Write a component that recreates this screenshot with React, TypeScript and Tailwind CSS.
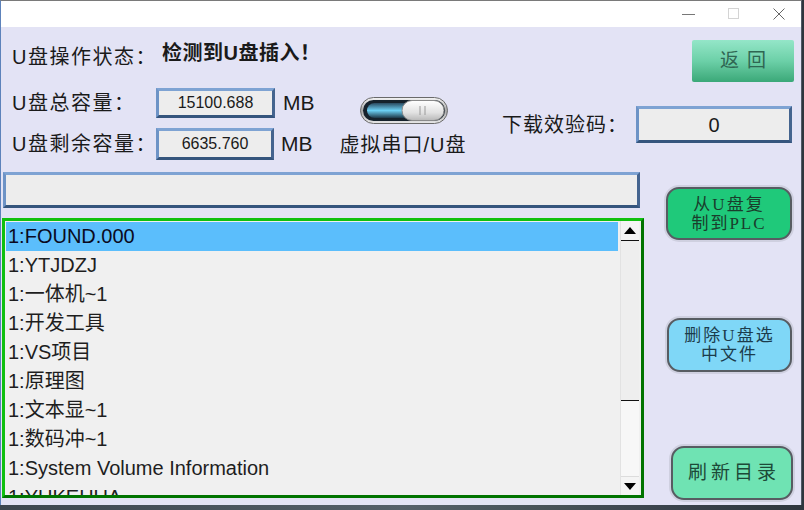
const rows = [
  "1:FOUND.000",
  "1:YTJDZJ",
  "1:一体机~1",
  "1:开发工具",
  "1:VS项目",
  "1:原理图",
  "1:文本显~1",
  "1:数码冲~1",
  "1:System Volume Information",
  "1:YUKEHUA",
];

function Toggle() {
  return (
    <svg width="88" height="27" viewBox="0 0 88 27">
      <defs>
        <linearGradient id="rim" x1="0" y1="0" x2="0" y2="1">
          <stop offset="0" stopColor="#f4f4f4" />
          <stop offset="0.5" stopColor="#a8a8a8" />
          <stop offset="1" stopColor="#e8e8e8" />
        </linearGradient>
        <linearGradient id="glow" x1="0" y1="0" x2="0" y2="1">
          <stop offset="0" stopColor="#2a4a60" />
          <stop offset="0.5" stopColor="#6cd0f4" />
          <stop offset="1" stopColor="#1e3848" />
        </linearGradient>
        <linearGradient id="knob" x1="0" y1="0" x2="0" y2="1">
          <stop offset="0" stopColor="#ffffff" />
          <stop offset="0.6" stopColor="#e2e2e2" />
          <stop offset="1" stopColor="#b8b8b8" />
        </linearGradient>
      </defs>
      <rect x="0.5" y="0.5" width="87" height="26" rx="13" fill="url(#rim)" stroke="#6a6a6a" />
      <rect x="3" y="3" width="82" height="21" rx="10.5" fill="#16222c" />
      <rect x="7" y="6" width="44" height="15" rx="7.5" fill="url(#glow)" />
      <rect x="42" y="3.5" width="42" height="20" rx="10" fill="url(#knob)" stroke="#8a8a8a" />
      <line x1="60" y1="9" x2="60" y2="18" stroke="#9a9a9a" strokeWidth="1" />
      <line x1="65" y1="9" x2="65" y2="18" stroke="#9a9a9a" strokeWidth="1" />
    </svg>
  );
}

export default function App() {
  return (
    <div className="w-[804px] h-[510px] overflow-hidden bg-gradient-to-r from-[#3c4650] via-[#55606a] to-[#2e363e] font-['Liberation_Sans','Noto_Sans_CJK_SC',sans-serif] text-[#1a1a1a]">
      <div className="w-[802px] h-[505px] flex flex-col border-l border-l-[#5d82bb] border-t border-t-[#7a7a7a] border-r border-r-[#505a66] bg-[#e3e3f5]">
        {/* Title bar */}
        <div className="h-[26px] shrink-0 bg-white flex items-center justify-end pr-[16px] gap-[33px]">
          <svg width="13" height="12" viewBox="0 0 13 12">
            <line x1="0" y1="6.5" x2="13" y2="6.5" stroke="#777" strokeWidth="1" />
          </svg>
          <svg width="12" height="12" viewBox="0 0 12 12">
            <rect x="0.5" y="0.5" width="10" height="10" fill="none" stroke="#d4d4d4" />
          </svg>
          <svg width="12" height="12" viewBox="0 0 12 12">
            <path d="M0.5 0.5 L11.5 11.5 M11.5 0.5 L0.5 11.5" stroke="#666" strokeWidth="1" />
          </svg>
        </div>

        {/* Status row */}
        <div className="flex h-[48px] mt-[13px]">
          <div className="ml-[11px] mt-[5px] w-[150px] text-[20px] leading-[24px] tracking-[1.5px]">U盘操作状态：</div>
          <div className="mt-[1px] text-[20px] leading-[24px] font-semibold tracking-[0.5px]">检测到U盘插入！</div>
          <button className="ml-auto mr-[7px] w-[102px] h-[42px] rounded-[2px] bg-gradient-to-b from-[#94e6c8] via-[#6cd0a8] to-[#3aa878] text-[19px] tracking-[8px] pl-[8px] text-[#2f6652] font-['Liberation_Serif','Noto_Sans_CJK_SC',serif]">
            返回
          </button>
        </div>

        {/* Capacity rows */}
        <div className="flex h-[77px]">
          <div className="ml-[11px] w-[326px] flex flex-col">
            <div className="flex items-center h-[30px]">
              <div className="w-[144px] text-[20px] leading-[24px] tracking-[1.5px]">U盘总容量：</div>
              <div className="w-[119px] h-[30px] flex items-center justify-center bg-[#ededed] border-[3px] border-t-[#7ea3d3] border-l-[#6d93c6] border-b-[#35557d] border-r-[#44648f] text-[16px]">
                15100.688
              </div>
              <div className="ml-[8px] text-[21px] leading-[24px]">MB</div>
            </div>
            <div className="flex items-center h-[32px] mt-[10px]">
              <div className="w-[144px] text-[20px] leading-[24px] tracking-[1.5px] whitespace-nowrap">U盘剩余容量：</div>
              <div className="w-[118px] h-[32px] flex items-center justify-center bg-[#ededed] border-[3px] border-t-[#7ea3d3] border-l-[#6d93c6] border-b-[#35557d] border-r-[#44648f] text-[16px]">
                6635.760
              </div>
              <div className="ml-[7px] text-[21px] leading-[24px]">MB</div>
            </div>
          </div>
          <div className="w-[130px] flex flex-col items-center">
            <div className="mt-[9px] ml-[2px]">
              <Toggle />
            </div>
            <div className="mt-[9px] text-[20px] leading-[24px] tracking-[1px] whitespace-nowrap">虚拟串口/U盘</div>
          </div>
          <div className="ml-[34px] mt-[18px] h-[37px] flex items-center">
            <div className="w-[134px] text-[20px] leading-[24px] tracking-[1px]">下载效验码：</div>
            <div className="w-[156px] h-[37px] flex items-center justify-center bg-[#ededed] border-[3px] border-t-[#7ea3d3] border-l-[#6d93c6] border-b-[#35557d] border-r-[#44648f] text-[20px]">
              0
            </div>
          </div>
        </div>

        {/* Lower area */}
        <div className="flex">
          <div className="w-[643px] flex flex-col">
            <div className="ml-[2px] mt-[7px] w-[637px] h-[36px] bg-[#ededed] border-[3px] border-t-[#7ea3d3] border-l-[#6d93c6] border-b-[#35557d] border-r-[#44648f]" />
            <div className="ml-[1px] mt-[10px] w-[642px] h-[280px] flex bg-[#f0f0f0] border-[3px] border-t-[#10c010] border-l-[#10c010] border-b-[#007400] border-r-[#007400]">
              <div className="w-[615px] pt-[1px] overflow-hidden">
                {rows.map((r, i) => (
                  <div
                    key={r}
                    className={`h-[29px] ml-[1px] mr-[2px] pl-[2px] text-[20px] leading-[29px] whitespace-nowrap ${
                      i === 0 ? "bg-[#5bbefc] text-[#0a0a20]" : "text-[#1e1e1e]"
                    }`}
                  >
                    {r}
                  </div>
                ))}
              </div>
              <div className="w-[19px] flex flex-col border-l border-l-[#e2e2e2]">
                <div className="h-[20px] flex items-center justify-center bg-[#f4f4f4] border-b border-b-[#111]">
                  <svg width="12" height="7" viewBox="0 0 12 7">
                    <polygon points="0,7 6,0 12,7" fill="#000" />
                  </svg>
                </div>
                <div className="h-[160px] bg-[#eeeeee] border-b border-b-[#111]" />
                <div className="flex-1 bg-[#f7f7f7]" />
                <div className="h-[19px] flex items-center justify-center bg-[#f4f4f4] border-t border-t-[#dcdcdc]">
                  <svg width="12" height="7" viewBox="0 0 12 7">
                    <polygon points="0,0 12,0 6,7" fill="#000" />
                  </svg>
                </div>
              </div>
            </div>
          </div>

          <div className="ml-[22px] w-[128px] flex flex-col font-['Liberation_Serif','Noto_Sans_CJK_SC',serif]">
            <button className="mt-[22px] w-[126px] h-[53px] rounded-[13px] border-2 border-[#575c62] bg-[#1fc97a] text-[#1a3d2c] text-[17px] leading-[19px] tracking-[2px] shadow-[0_0_0_2px_#cfd0e0]">
              从U盘复<br />制到PLC
            </button>
            <button className="mt-[78px] ml-[1px] w-[125px] h-[54px] rounded-[13px] border-2 border-[#575c62] bg-[#7fd7f7] text-[#1c3c4c] text-[17px] leading-[19px] tracking-[2px] shadow-[0_0_0_2px_#cfd0e0]">
              删除U盘选<br />中文件
            </button>
            <button className="mt-[74px] ml-[5px] w-[122px] h-[54px] rounded-[13px] border-2 border-[#575c62] bg-[#6fe3b3] text-[#1d4a38] text-[19px] tracking-[4px] pl-[4px] shadow-[0_0_0_2px_#cfd0e0]">
              刷新目录
            </button>
          </div>
        </div>
      </div>
    </div>
  );
}
